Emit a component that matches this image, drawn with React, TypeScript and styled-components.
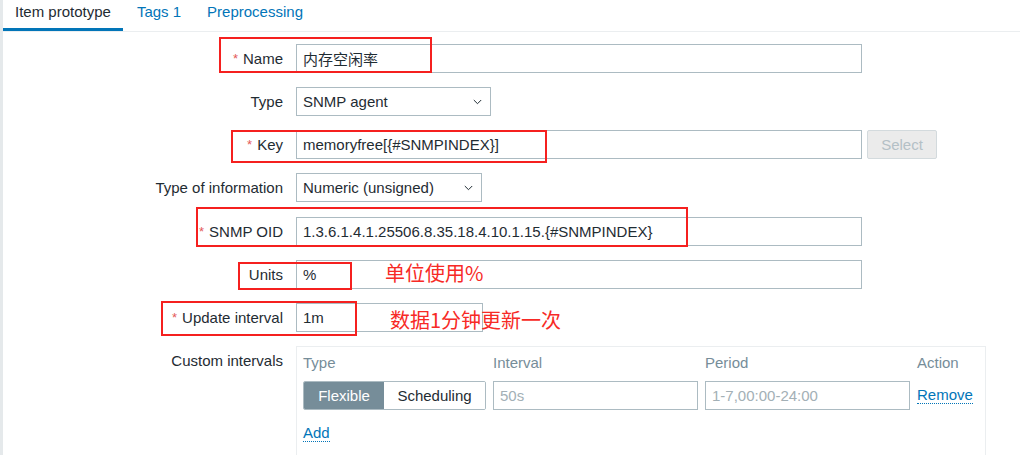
import React from 'react'
import styled, { createGlobalStyle } from 'styled-components'

const GlobalStyle = createGlobalStyle`
  body {
    margin: 0;
    background: #ffffff;
    font-family: "Liberation Sans", Arial, "Noto Sans CJK SC", sans-serif;
    font-size: 15px;
    color: #1f2c33;
  }
`

const Page = styled.div`
  min-height: 455px;
  box-sizing: border-box;
  border-left: 3px solid #e5e9eb;
  overflow: hidden;
`

const TabBar = styled.div`
  display: flex;
  gap: 2px;
  height: 31px;
  border-bottom: 1px solid #ebeef0;
`

const Tab = styled.div<{ $active?: boolean }>`
  box-sizing: border-box;
  height: 31px;
  padding: 3px 12px 0;
  line-height: 18px;
  color: ${p => (p.$active ? '#1f2c33' : '#0275b8')};
  border-bottom: 3px solid ${p => (p.$active ? '#0275b8' : 'transparent')};
`

const Form = styled.div`
  display: flex;
  flex-direction: column;
  gap: 14.15px;
  padding-top: 12px;
`

const Row = styled.div`
  position: relative;
  display: flex;
  align-items: flex-start;
`

const Label = styled.div`
  width: 280px;
  height: 29px;
  margin-right: 13px;
  display: flex;
  align-items: center;
  justify-content: flex-end;
  white-space: nowrap;
  flex-shrink: 0;
`

const Req = styled.span`
  color: #e45959;
  font-size: 13px;
  line-height: 13px;
  margin-right: 5px;
`

const Input = styled.input<{ $w: number; $muted?: boolean }>`
  box-sizing: border-box;
  width: ${p => p.$w}px;
  height: 29px;
  padding: 0 6px;
  border: 1px solid #acbbc2;
  border-radius: 0;
  font-family: "Liberation Sans", Arial, "Noto Sans CJK SC", sans-serif;
  font-size: 15px;
  color: ${p => (p.$muted ? '#a3b0b6' : '#1f2c33')};
  background: #fff;
  outline: none;
  flex-shrink: 0;
`

const SelectBox = styled.div<{ $w: number }>`
  box-sizing: border-box;
  width: ${p => p.$w}px;
  height: 29px;
  padding: 0 8px 0 6px;
  border: 1px solid #acbbc2;
  display: flex;
  align-items: center;
  justify-content: space-between;
`

const GhostButton = styled.div`
  box-sizing: border-box;
  width: 70px;
  height: 29px;
  margin-left: 5px;
  border: 1px solid #d3dadd;
  border-radius: 2px;
  background: #ebebeb;
  color: #b4c0c6;
  text-align: center;
  line-height: 27px;
`

const Mark = styled.div<{ $top: number; $left: number; $w: number; $h: number }>`
  position: absolute;
  top: ${p => p.$top}px;
  left: ${p => p.$left}px;
  width: ${p => p.$w}px;
  height: ${p => p.$h}px;
  box-sizing: border-box;
  border: 2px solid #f5201f;
  pointer-events: none;
`

const Note = styled.div<{ $top: number; $left: number }>`
  position: absolute;
  top: ${p => p.$top}px;
  left: ${p => p.$left}px;
  font-family: "Noto Sans CJK SC", sans-serif;
  font-size: 20px;
  line-height: 26px;
  color: #f72a26;
  white-space: nowrap;
`

const IntervalsBox = styled.div`
  box-sizing: border-box;
  width: 690px;
  min-height: 130px;
  padding: 7px 6px 0;
  border: 1px solid #ebeef0;
`

const IntervalGrid = styled.div`
  display: grid;
  grid-template-columns: 183px 205px 205px auto;
  column-gap: 7px;
  row-gap: 9px;
  align-items: center;
`

const ColHead = styled.div`
  color: #768d99;
  line-height: 18px;
`

const Segmented = styled.div`
  display: flex;
  width: 183px;
  height: 29px;
  box-sizing: border-box;
  border: 1px solid #acbbc2;
  border-radius: 2px;
  overflow: hidden;
`

const SegButton = styled.div<{ $on?: boolean }>`
  flex: ${p => (p.$on ? '0 0 80px' : '1 1 auto')};
  text-align: center;
  line-height: 27px;
  background: ${p => (p.$on ? '#768d99' : '#ffffff')};
  color: ${p => (p.$on ? '#ffffff' : '#1f2c33')};
`

const Link = styled.span`
  display: inline-block;
  color: #0275b8;
  line-height: 17px;
  border-bottom: 1px dotted #0275b8;
`

const AddRow = styled.div`
  margin-top: 14px;
`

const Chevron = () => (
  <svg width="9" height="6" viewBox="0 0 9 6">
    <polyline points="0.8,1 4.5,4.7 8.2,1" fill="none" stroke="#1f2c33" strokeWidth="1" />
  </svg>
)

export default function App() {
  return (
    <Page>
      <GlobalStyle />
      <TabBar>
        <Tab $active>Item prototype</Tab>
        <Tab>Tags 1</Tab>
        <Tab>Preprocessing</Tab>
      </TabBar>

      <Form>
        <Row>
          <Label><Req>*</Req>Name</Label>
          <Input $w={566} defaultValue="内存空闲率" readOnly />
          <Mark $top={-7} $left={216} $w={213} $h={36} />
        </Row>

        <Row>
          <Label>Type</Label>
          <SelectBox $w={195}>SNMP agent<Chevron /></SelectBox>
        </Row>

        <Row>
          <Label><Req>*</Req>Key</Label>
          <Input $w={566} defaultValue="memoryfree[{#SNMPINDEX}]" readOnly />
          <GhostButton>Select</GhostButton>
          <Mark $top={0} $left={228} $w={316} $h={33} />
        </Row>

        <Row>
          <Label>Type of information</Label>
          <SelectBox $w={186}>Numeric (unsigned)<Chevron /></SelectBox>
        </Row>

        <Row>
          <Label><Req>*</Req>SNMP OID</Label>
          <Input $w={566} defaultValue="1.3.6.1.4.1.25506.8.35.18.4.10.1.15.{#SNMPINDEX}" readOnly />
          <Mark $top={-10} $left={193} $w={492} $h={40} />
        </Row>

        <Row>
          <Label>Units</Label>
          <Input $w={566} defaultValue="%" readOnly />
          <Mark $top={2} $left={235} $w={114} $h={28} />
          <Note $top={0} $left={382}>单位使用%</Note>
        </Row>

        <Row>
          <Label><Req>*</Req>Update interval</Label>
          <Input $w={187} defaultValue="1m" readOnly />
          <Mark $top={-2} $left={158} $w={196} $h={35} />
          <Note $top={4} $left={387}>数据1分钟更新一次</Note>
        </Row>

        <Row>
          <Label>Custom intervals</Label>
          <IntervalsBox>
            <IntervalGrid>
              <ColHead>Type</ColHead>
              <ColHead>Interval</ColHead>
              <ColHead>Period</ColHead>
              <ColHead>Action</ColHead>
              <Segmented>
                <SegButton $on>Flexible</SegButton>
                <SegButton>Scheduling</SegButton>
              </Segmented>
              <Input $w={205} $muted defaultValue="50s" readOnly />
              <Input $w={205} $muted defaultValue="1-7,00:00-24:00" readOnly />
              <div><Link>Remove</Link></div>
            </IntervalGrid>
            <AddRow><Link>Add</Link></AddRow>
          </IntervalsBox>
        </Row>
      </Form>
    </Page>
  )
}
